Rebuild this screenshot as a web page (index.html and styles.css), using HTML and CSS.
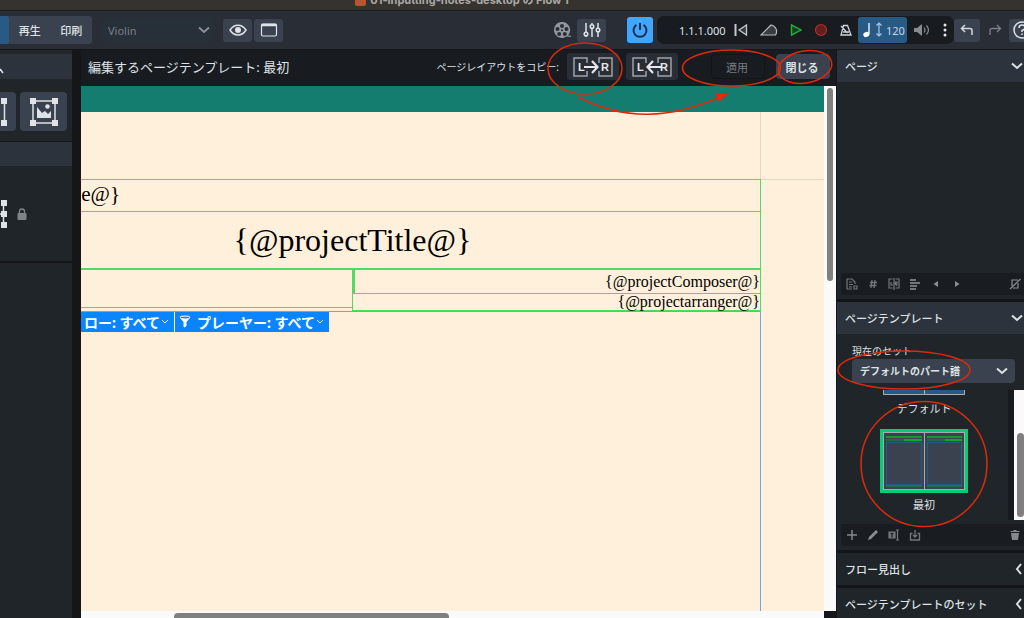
FILE: index.html
```
<!DOCTYPE html>
<html lang="ja">
<head>
  <meta charset="UTF-8" />
  <meta name="viewport" content="width=device-width, initial-scale=1" />
  <title>01-inputting-notes-desktop の Flow 1</title>
  <link rel="stylesheet" href="styles.css">
</head>
<body>
  <!-- Window title -->
  <div class="titlebar">
    <span class="doc-icon"></span>
    <span>01-inputting-notes-desktop の Flow 1</span>
  </div>

  <!-- Main toolbar -->
  <header class="toolbar">
    <nav class="modes">
      <button class="mode active" aria-label="浄書"></button>
      <button class="mode">再生</button>
      <button class="mode">印刷</button>
    </nav>
    <div class="select-box layout-select">
      <select aria-label="レイアウト"><option>Violin</option></select>
      <svg class="chevron" viewBox="0 0 12 8"><path d="M1 1.5l5 4.5 5-4.5"/></svg>
    </div>
    <div class="view-buttons">
      <button class="tool" aria-label="表示">
        <svg width="18" height="14" viewBox="0 0 18 14"><path d="M1 7C5 .5 13 .5 17 7C13 13.500 5 13.500 1 7Z" fill="none" stroke="#e0e3e8" stroke-width="1.500"/><circle cx="9" cy="7" r="3" fill="#e0e3e8"/></svg>
      </button>
      <button class="tool" aria-label="ウィンドウ">
        <svg width="18" height="14" viewBox="0 0 18 14"><rect x="1.500" y="1" width="15" height="12" rx="1.500" fill="none" stroke="#e0e3e8" stroke-width="1.200"/><path d="M1.500 2h15" stroke="#e0e3e8" stroke-width="2.500"/></svg>
      </button>
    </div>

    <div class="toolbar-right">
      <button class="bare" aria-label="ビデオ">
        <svg width="18" height="18" viewBox="0 0 18 18"><path fill="#93979d" fill-rule="evenodd" d="M9 1a8 8 0 1 0 4.500 14.600l4.500.4v-1.300l-3-.3A8 8 0 0 0 9 1zM9 3a2 2 0 1 1 0 4 2 2 0 0 1 0-4zM4.500 6a2 2 0 1 1 0 4 2 2 0 0 1 0-4zM13.500 6a2 2 0 1 1 0 4 2 2 0 0 1 0-4zM6.200 11a2 2 0 1 1 0 4 2 2 0 0 1 0-4zM11.800 11a2 2 0 1 1 0 4 2 2 0 0 1 0-4zM9 8.200a1 1 0 1 0 0 2 1 1 0 0 0 0-2z"/></svg>
      </button>
      <button class="tool" aria-label="ミキサー">
        <svg width="18" height="16" viewBox="0 0 18 16" fill="#39424e" stroke="#e0e3e8" stroke-width="1.500"><path d="M3 1v14M9 1v14M15 1v14"/><circle cx="3" cy="12" r="1.800"/><circle cx="9" cy="4.500" r="1.800"/><circle cx="15" cy="8" r="1.800"/></svg>
      </button>
      <button class="power" aria-label="有効化">
        <svg width="16" height="16" viewBox="0 0 16 16" fill="none" stroke="#14304d" stroke-width="2"><path d="M4.500 2.800a6.500 6.500 0 1 0 7 0M8 1v7"/></svg>
      </button>
      <div class="transport">
        <span class="position">1.1.1.000</span>
        <button class="bare" aria-label="先頭へ">
          <svg width="14" height="14" viewBox="0 0 14 14" fill="#3a3d40" stroke="#c4c7cb" stroke-width="1.300"><path d="M1.500 1v12" stroke-width="2"/><path d="M12.500 2v10L5 7z"/></svg>
        </button>
        <button class="bare" aria-label="ディレイ">
          <svg width="18" height="14" viewBox="0 0 18 14" fill="#3a3d40" stroke="#b7babe" stroke-width="1.200"><path d="M1 12L11 2C16 3 18 8 15.500 12z"/></svg>
        </button>
        <button class="bare" aria-label="再生開始">
          <svg width="12" height="14" viewBox="0 0 12 14"><path d="M1.500 2v10L11 7z" fill="#12461f" stroke="#24b43c" stroke-width="1.400"/></svg>
        </button>
        <button class="bare" aria-label="録音">
          <svg width="14" height="14" viewBox="0 0 14 14"><circle cx="7" cy="7" r="5.500" fill="#61201f" stroke="#bd2b25" stroke-width="1.200"/></svg>
        </button>
        <button class="bare" aria-label="クリック">
          <svg width="12" height="14" viewBox="0 0 12 14" fill="none" stroke="#d0d3d6" stroke-width="1.300"><path d="M3.500 2.500h4L11 12H1zM1 3l6.500 7M3 9h6"/></svg>
        </button>
        <button class="tempo">
          <svg width="20" height="18" viewBox="0 0 20 18"><path d="M7 2v11" stroke="#fff" stroke-width="1.300"/><ellipse cx="4.300" cy="13.500" rx="3.100" ry="2.500" fill="#fff" transform="rotate(-20 4.300 13.500)"/><path d="M17 2v13M14.500 4.500L17 2l2.500 2.500M14.500 12.500L17 15l2.500-2.500" fill="none" stroke="#a9c6de" stroke-width="1.200"/></svg>
          <span>120</span>
        </button>
        <button class="bare" aria-label="音量">
          <svg width="18" height="14" viewBox="0 0 18 14"><path d="M1 5h3l5-4v12L4 9H1z" fill="#888c91"/><path d="M11 4.500q2 2.500 0 5M13.500 2.500q4 4.500 0 9" fill="none" stroke="#888c91" stroke-width="1.200"/></svg>
        </button>
        <button class="bare" aria-label="その他">
          <svg width="4" height="14" viewBox="0 0 4 14" fill="#e4e6e8"><circle cx="2" cy="2" r="1.500"/><circle cx="2" cy="7" r="1.500"/><circle cx="2" cy="12" r="1.500"/></svg>
        </button>
      </div>
      <button class="tool undo" aria-label="元に戻す">
        <svg width="14" height="12" viewBox="0 0 14 12" fill="none" stroke="#d5d9de" stroke-width="1.500"><path d="M5 1L1.500 4.500 5 8M1.500 4.500H10q2 0 2 2V11"/></svg>
      </button>
      <button class="bare redo" aria-label="やり直し">
        <svg width="14" height="12" viewBox="0 0 14 12" fill="none" stroke="#7b8087" stroke-width="1.300"><path d="M9 1l3.500 3.500L9 8M12.500 4.500H4q-2 0-2 2V11"/></svg>
      </button>
      <button class="tool help" aria-label="ヘルプ">
        <svg width="18" height="18" viewBox="0 0 18 18" fill="none" stroke="#e0e3e8" stroke-width="1.500"><circle cx="9" cy="9" r="8"/><path d="M6 7q0-3 3-3t3 2.500q0 1.500-3 3V11M9 12.500V14"/></svg>
      </button>
    </div>
  </header>

  <main class="workspace">
    <!-- Left panel -->
    <aside class="left-panel">
      <div class="left-header"><svg width="4" height="6" viewBox="0 0 4 6"><path d="M0 1l3 4" stroke="#dfe2e6" stroke-width="1.500"/></svg></div>
      <div class="insert-tools">
        <button class="insert cut" aria-label="テキストフレームを挿入">
          <svg width="9" height="28" viewBox="0 0 9 28"><path d="M4.500 3v22" stroke="#dfe2e6" stroke-width="1.500"/><path d="M1 0h6v6H1zM1 22h6v6H1z" fill="#dfe2e6"/></svg>
        </button>
        <button class="insert" aria-label="グラフィックフレームを挿入">
          <svg width="28" height="28" viewBox="0 0 28 28"><path d="M3 3h22v22H3z" fill="none" stroke="#dfe2e6" stroke-width="1.500"/><path d="M0 0h6v6H0zM22 0h6v6h-6zM0 22h6v6H0zM22 22h6v6h-6z" fill="#dfe2e6"/><path d="M7 9l5 6 3-2 3 3 3-3v7H7z" fill="#dfe2e6"/><circle cx="17.500" cy="8.500" r="2.300" fill="#dfe2e6"/></svg>
        </button>
      </div>
      <div class="left-header second"></div>
      <div class="constraints">
        <svg width="7" height="28" viewBox="0 0 7 28"><path d="M3.500 3v22M0 14h4" stroke="#dfe2e6" stroke-width="1.500"/><path d="M1 0h6v6H1zM1 11h6v6H1zM1 22h6v6H1z" fill="#dfe2e6"/></svg>
        <svg width="10" height="12" viewBox="0 0 10 12"><rect x="0.500" y="5" width="9" height="7" rx="1" fill="#7f8489"/><path d="M2.500 5.500V3.500a2.500 2.500 0 0 1 5 0v2" fill="none" stroke="#7f8489" stroke-width="1.300"/></svg>
      </div>
    </aside>

    <!-- Page template editor -->
    <section class="editor">
      <div class="editor-bar">
        <h1>編集するページテンプレート: 最初</h1>
        <span class="copy-label">ページレイアウトをコピー:</span>
        <button class="copy" aria-label="左から右へコピー">
          <svg width="40" height="20" viewBox="0 0 40 20"><path d="M14 6V1H1v18h13v-5M26 6V1h13v18H26v-5" fill="none" stroke="#9da1a8" stroke-width="1.500"/><path d="M11 10h13M19 4l5.500 6-5.500 6" fill="none" stroke="#e5e7eb" stroke-width="2.200"/><text x="5" y="14">L</text><text x="28" y="14">R</text></svg>
        </button>
        <button class="copy" aria-label="右から左へコピー">
          <svg width="40" height="20" viewBox="0 0 40 20"><path d="M14 6V1H1v18h13v-5M26 6V1h13v18H26v-5" fill="none" stroke="#9da1a8" stroke-width="1.500"/><path d="M29 10H16M21 4l-5.500 6 5.500 6" fill="none" stroke="#e5e7eb" stroke-width="2.200"/><text x="5" y="14">L</text><text x="28" y="14">R</text></svg>
        </button>
        <button class="apply" disabled>適用</button>
        <button class="close">閉じる</button>
      </div>

      <div class="canvas">
        <div class="page">
          <div class="page-band"></div>
          <div class="page-margin"><div class="margin-guide"></div></div>
          <div class="frames">
            <div class="frame name-frame"><span>{@layoutName@}</span></div>
            <div class="frame title-frame">{@projectTitle@}</div>
            <div class="credits">
              <div class="frame lyricist-frame"></div>
              <div>
                <div class="frame composer-frame">{@projectComposer@}</div>
                <div class="frame arranger-frame">{@projectarranger@}</div>
              </div>
            </div>
            <div class="music-frame">
              <button class="filter flow-filter"><span>ロー: すべて</span><svg width="8" height="6" viewBox="0 0 8 6"><path d="M1 1l3 3 3-3"/></svg></button>
              <button class="filter"><svg class="funnel" width="12" height="13" viewBox="0 0 12 13"><path d="M1 2l4 5v5l2-1V7l4-5z" fill="#fff"/><ellipse cx="6" cy="2.500" rx="5" ry="1.500" fill="#0a84ff"/></svg><span>プレーヤー: すべて</span><svg width="8" height="6" viewBox="0 0 8 6"><path d="M1 1l3 3 3-3"/></svg></button>
            </div>
          </div>
        </div>
        <div class="scroll-y"><div class="thumb"></div></div>
        <div class="scroll-x"><div class="thumb"></div></div>
      </div>
    </section>

    <!-- Right panel -->
    <aside class="right-panel">
      <section class="pages">
        <h2><button class="section-header">ページ<svg class="chevron" viewBox="0 0 12 8"><path d="M1 1.500l5 4.500 5-4.500"/></svg></button></h2>
        <div class="pages-body"></div>
        <div class="actions">
          <button class="bare" aria-label="ページを挿入"><svg width="12" height="12" viewBox="0 0 12 12" fill="none" stroke="#73777b" stroke-width="1.200"><path d="M6 11H1V1h5l3 3v2M3 4h3M3 6.500h4M3 9h3"/><path d="M8 8h3v3H8z"/></svg></button>
          <button class="bare" aria-label="ページ番号"><svg width="12" height="12" viewBox="0 0 12 12" stroke="#73777b" stroke-width="1.300"><path d="M5 2L4 10M8 2L7 10M3 4.500h7M2.500 7.500h7"/></svg></button>
          <button class="bare" aria-label="ページを入れ替え"><svg width="12" height="12" viewBox="0 0 12 12" fill="none" stroke="#73777b" stroke-width="1.200"><path d="M4.500 1H1v9h3.500M7.500 1H11v9H7.500M6 0v12M3 4v3h2M7.500 7V4H9v2H7.500L9 8"/></svg></button>
          <button class="bare" aria-label="配置"><svg width="12" height="12" viewBox="0 0 12 12" stroke="#73777b" stroke-width="2"><path d="M1 2h6M1 5h10M1 8h7M1 11h6"/></svg></button>
          <button class="bare" aria-label="前へ"><svg width="12" height="12" viewBox="0 0 12 12"><path d="M8 3v6L3.500 6z" fill="#8b8f93"/></svg></button>
          <button class="bare" aria-label="次へ"><svg width="12" height="12" viewBox="0 0 12 12"><path d="M4 3v6l4.500-3z" fill="#8b8f93"/></svg></button>
          <button class="bare last" aria-label="オーバーライドを削除"><svg width="12" height="12" viewBox="0 0 12 12" fill="none" stroke="#8b8f93" stroke-width="1.200"><path d="M3 8V2h6M9 5v5H4M1 11L11.500 1"/></svg></button>
        </div>
      </section>

      <section class="templates">
        <h2><button class="section-header">ページテンプレート<svg class="chevron" viewBox="0 0 12 8"><path d="M1 1.500l5 4.500 5-4.500"/></svg></button></h2>
        <div class="set-field">
          <label for="currentSet">現在のセット</label>
          <div class="select-box set-select">
            <select id="currentSet"><option>デフォルトのパート譜</option></select>
            <svg class="chevron" viewBox="0 0 12 8"><path d="M1 1.500l5 4.500 5-4.500"/></svg>
          </div>
        </div>
        <div class="template-list">
          <div class="template-items">
            <div class="spread partial"><div class="leaf"></div><div class="leaf"></div></div>
            <span class="caption">デフォルト</span>
            <div class="spread selected">
              <div class="leaf"><i class="strip"></i><i class="strip short"></i><i class="music"></i><i class="strip foot"></i></div>
              <div class="leaf"><i class="strip"></i><i class="strip short"></i><i class="music"></i><i class="strip foot"></i></div>
            </div>
            <span class="caption">最初</span>
          </div>
          <div class="list-scroll"><div class="thumb"></div></div>
        </div>
        <div class="actions">
          <button class="bare" aria-label="追加"><svg width="12" height="12" viewBox="0 0 12 12" stroke="#85898d" stroke-width="1.500"><path d="M6 1v10M1 6h10"/></svg></button>
          <button class="bare" aria-label="編集"><svg width="12" height="12" viewBox="0 0 12 12"><path d="M1 11l1-3 7-7 2 2-7 7z" fill="#8b8f93"/></svg></button>
          <button class="bare" aria-label="名前を変更"><svg width="12" height="12" viewBox="0 0 12 12" fill="none" stroke="#73777b" stroke-width="1.200"><path d="M1 3h6v6H1z" fill="#73777b"/><path d="M2.500 4.500h3M4 4.500v4" stroke="#191c20"/><path d="M8 1h3M9.500 1v10M8 11h3"/></svg></button>
          <button class="bare" aria-label="読み込み"><svg width="12" height="12" viewBox="0 0 12 12" fill="none" stroke="#73777b" stroke-width="1.300"><path d="M3.500 4.500H1.500V11h9V4.500h-2M6 1v7M4 6l2 2 2-2"/></svg></button>
          <button class="bare last" aria-label="削除"><svg width="12" height="12" viewBox="0 0 12 12" fill="#85898d"><path d="M2 4h8l-1 7H3zM1.500 2H4.500V1h3v1h3v1h-9z"/></svg></button>
        </div>
      </section>

      <h2><button class="section-header closed">フロー見出し<svg class="chevron-left" viewBox="0 0 8 12"><path d="M6 1L2 6l4 5"/></svg></button></h2>
      <h2><button class="section-header closed">ページテンプレートのセット<svg class="chevron-left" viewBox="0 0 8 12"><path d="M6 1L2 6l4 5"/></svg></button></h2>
    </aside>
  </main>

  <!-- Red markings over the window -->
  <svg class="marks" width="1024" height="618" viewBox="0 0 1024 618">
    <ellipse cx="585" cy="68.500" rx="37" ry="25.500"/>
    <ellipse cx="731.500" cy="68" rx="49" ry="18"/>
    <ellipse cx="805" cy="67" rx="27" ry="16" transform="rotate(-10 805 67)"/>
    <ellipse cx="904" cy="370" rx="66" ry="19"/>
    <ellipse cx="924" cy="464" rx="63" ry="62.500"/>
    <path d="M578 97C625 121 670 119 720 97"/>
    <path class="head" d="M727 94l-8 7-2.500-7z"/>
  </svg>
</body>
</html>
```
FILE: styles.css
```
* {
  box-sizing: border-box;
}
body {
  margin: 0;
  height: 100vh;
  display: flex;
  flex-direction: column;
  overflow: hidden;
  position: relative;
  background: #14161a;
  color: #dfe2e6;
  font-family: "Noto Sans", "Noto Sans CJK JP", sans-serif;
  font-size: 11px;
}
button, select {
  font: inherit;
  color: inherit;
  border: none;
  padding: 0;
  margin: 0;
  background: none;
}
svg {
  display: block;
  flex: none;
}
h1, h2 {
  margin: 0;
  font-size: 11px;
  font-weight: 500;
}

/* Title bar */
.titlebar {
  height: 11px;
  flex: none;
  display: flex;
  justify-content: center;
  align-items: flex-end;
  gap: 4px;
  padding: 0 100px 4px 0;
  overflow: hidden;
  background: #343330;
  border-bottom: 1px solid #1b1b1b;
  color: #aaa8a5;
  font-family: Inter, "Noto Sans CJK JP", sans-serif;
  font-size: 11px;
  font-weight: 700;
  line-height: 12px;
}
.doc-icon {
  width: 11px;
  height: 11px;
  border-radius: 2px;
  background: #b4572e;
}

/* Toolbar */
.toolbar {
  height: 38px;
  flex: none;
  display: flex;
  align-items: center;
  background: #292d35;
  overflow: hidden;
}
.modes {
  display: flex;
  height: 28px;
  width: 92px;
  background: #39424e;
  border-radius: 0 3px 3px 0;
  font-weight: 500;
}
.mode {
  width: 42px;
}
.mode.active {
  width: 9px;
  background: #285a86;
  border-radius: 0 3px 3px 0;
}
.select-box {
  display: flex;
  align-items: center;
  border-radius: 4px;
}
.select-box select {
  flex: 1;
  min-width: 0;
  height: 100%;
  appearance: none;
}
.chevron {
  width: 12px;
  height: 8px;
  fill: none;
  stroke: #dfe2e6;
  stroke-width: 2;
}
.layout-select {
  width: 112px;
  height: 24px;
  margin-left: 10px;
  padding: 0 4px 0 6px;
  background: #272f38;
}
.layout-select select {
  color: #7a8088;
  font-size: 11px;
}
.layout-select .chevron {
  stroke: #8a9098;
}
.view-buttons {
  display: flex;
  gap: 2px;
  margin-left: 9px;
}
.tool, .power {
  display: flex;
  align-items: center;
  justify-content: center;
  width: 29px;
  height: 23px;
  border-radius: 3px;
  background: #39424e;
}
.toolbar-right {
  display: flex;
  align-items: center;
  margin-left: auto;
  margin-right: -11px;
}
.toolbar-right > .bare {
  margin-right: 6px;
}
.power {
  width: 26px;
  height: 26px;
  margin: 0 4px 0 21px;
  background: #42a5ff;
}
.transport {
  display: flex;
  align-items: center;
  gap: 12px;
  height: 28px;
  width: 297px;
  padding: 0 7px 0 22px;
  border-radius: 7px;
  background: #181b20;
}
.position {
  width: 43px;
  white-space: nowrap;
}
.tempo {
  display: flex;
  align-items: center;
  gap: 4px;
  height: 26px;
  width: 51px;
  margin: 0 -6px;
  padding-left: 4px;
  border-radius: 3px;
  background: #285a86;
  color: #c5d7e6;
}
.undo {
  width: 26px;
  margin-right: 8px;
}
.toolbar-right > .redo {
  margin-right: 7px;
}
.help {
  width: 26px;
}

/* Workspace */
.workspace {
  flex: 1;
  min-height: 0;
  display: grid;
  grid-template-columns: 72px minmax(0, 1fr) 187px;
  border-top: 1px solid #14161a;
}
.left-panel {
  background: #202529;
  border-top: 4px solid #23272b;
}
.left-header {
  height: 25px;
  padding-top: 14px;
  background: #2d333c;
}
.left-header.second {
  border-top: 1px solid #14161a;
}
.insert-tools {
  display: flex;
  gap: 4px;
  padding: 13px 0 10px;
}
.insert {
  width: 47px;
  height: 39px;
  display: flex;
  align-items: center;
  justify-content: center;
  border-radius: 4px;
  background: #39424e;
}
.insert.cut {
  width: 16px;
  border-radius: 0 4px 4px 0;
  justify-content: flex-start;
}
.constraints {
  display: flex;
  align-items: center;
  gap: 10px;
  height: 97px;
  border-bottom: 2px solid #14161a;
}

/* Editor */
.editor {
  display: flex;
  flex-direction: column;
  min-width: 0;
  min-height: 0;
  padding: 0 1px 0 9px;
}
.editor-bar {
  height: 36px;
  flex: none;
  display: flex;
  align-items: center;
  padding: 0 6px 3px 7px;
  background: #181b20;
}
.editor-bar h1 {
  font-size: 13px;
  font-weight: 400;
  white-space: nowrap;
}
.copy-label {
  margin-left: auto;
  margin-right: 8px;
  font-size: 10px;
  white-space: nowrap;
}
.copy {
  display: flex;
  align-items: center;
  justify-content: center;
  width: 52px;
  height: 27px;
  margin-right: 7px;
  border-radius: 3px;
  background: #292d35;
}
.copy text {
  fill: #e5e7eb;
  font-family: "Liberation Sans", sans-serif;
  font-size: 11px;
  font-weight: 700;
}
.apply, .close {
  width: 54px;
  height: 25px;
  border-radius: 4px;
}
.apply {
  margin: 0 11px 0 26px;
  padding-right: 2px;
  border: 1px solid #121417;
  color: #777b80;
}
.close {
  padding-right: 2px;
  background: #39424e;
  font-weight: 700;
}
.canvas {
  flex: 1;
  min-height: 0;
  display: grid;
  grid-template-columns: minmax(0, 1fr) 12px;
  grid-template-rows: minmax(0, 1fr) 7px;
}
.page {
  display: flex;
  flex-direction: column;
  background: #fef0da;
  color: #000;
  font-family: "Liberation Serif", serif;
}
.page-band {
  height: 26px;
  background: #157d6f;
}
.page-margin {
  height: 68px;
  border-bottom: 1px solid #e3d6c2;
}
.margin-guide {
  height: 100%;
  margin-right: 63px;
  border-right: 1px solid #e3d6c2;
}
.frames {
  flex: 1;
  display: flex;
  flex-direction: column;
  margin: -1px 63px 0 0;
}
.frame {
  display: flex;
  align-items: center;
  border: 1px solid #4fdc66;
  border-left: none;
}
.name-frame {
  height: 33px;
  padding-bottom: 3px;
  font-size: 21px;
}
.name-frame span {
  display: flex;
  justify-content: flex-end;
  width: 39px;
  overflow: hidden;
}
.title-frame {
  height: 59px;
  margin-top: -1px;
  padding-right: 136px;
  justify-content: center;
  border-bottom-width: 2px;
  font-size: 32px;
}
.credits {
  display: grid;
  grid-template-columns: 2fr 3fr;
  height: 41px;
}
.lyricist-frame {
  height: 38px;
  border-top: none;
}
.composer-frame, .arranger-frame {
  justify-content: flex-end;
  border-top: none;
  font-size: 16px;
}
.composer-frame {
  height: 24px;
  border-left: 2px solid #4fdc66;
}
.arranger-frame {
  height: 17px;
  margin-left: -1px;
  border-left: 1px solid #4fdc66;
}
.music-frame {
  flex: 1;
  display: flex;
  align-items: flex-start;
  gap: 1px;
  border-top: 1px solid #6aa6ee;
  border-right: 1px solid #6aa6ee;
}
.filter {
  display: flex;
  align-items: center;
  gap: 1px;
  height: 20px;
  padding: 0 5px 1px 4px;
  background: #0a84ff;
  color: #fff;
  font-family: "Noto Sans", "Noto Sans CJK JP", sans-serif;
  font-size: 14px;
  font-weight: 700;
  white-space: nowrap;
}
.filter svg {
  fill: none;
  stroke: #fff;
  stroke-width: 1;
}
.filter .funnel {
  margin-right: 5px;
}
.flow-filter {
  justify-content: flex-end;
  width: 93px;
}
.thumb {
  border-radius: 4px;
  background: #808080;
}
.scroll-y {
  padding: 2px 3px;
  background: #fafafa;
}
.scroll-y .thumb {
  height: 37%;
}
.scroll-x {
  padding: 2px 0 0 93px;
  background: #fafafa;
}
.scroll-x .thumb {
  width: 275px;
  max-width: 100%;
  height: 8px;
}

/* Right panel */
.right-panel {
  display: flex;
  flex-direction: column;
  gap: 3px;
  background: #141518;
  overflow: hidden;
}
.section-header {
  display: flex;
  align-items: center;
  justify-content: space-between;
  width: 100%;
  height: 32px;
  padding: 0 1px 0 8px;
  background: #2d333c;
  text-align: left;
}
.section-header.closed {
  background: #202529;
}
.chevron-left {
  width: 8px;
  height: 12px;
  fill: none;
  stroke: #dfe2e6;
  stroke-width: 2;
}
.pages, .templates {
  background: #202529;
  padding-bottom: 4px;
}
.pages-body {
  height: 191px;
}
.actions {
  display: flex;
  align-items: center;
  gap: 9px;
  height: 22px;
  margin-left: 4px;
  padding: 0 3px 0 5px;
  border-radius: 3px 0 0 3px;
  background: #191c20;
}
.actions .last {
  margin-left: auto;
}
.set-field {
  padding: 9px 9px 7px 15px;
}
.set-field label {
  display: block;
  line-height: 16px;
  font-size: 10px;
}
.set-select {
  height: 24px;
  padding: 0 7px 0 4px;
  background: #39424e;
}
.set-select select {
  padding-left: 4px;
  font-size: 10px;
  font-weight: 700;
}
.template-list {
  display: flex;
  height: 130px;
  margin-bottom: 4px;
}
.template-items {
  flex: 1;
  display: flex;
  flex-direction: column;
  align-items: center;
  padding-left: 3px;
  border-right: 6px solid #16191d;
}
.spread {
  display: flex;
  width: 82px;
  background: #39424e;
}
.leaf {
  flex: 1;
  padding: 3px 2px 2px;
  border: 1px solid #a9abb0;
}
.leaf + .leaf {
  border-left-width: 0;
}
.spread.partial .leaf {
  height: 5px;
  padding: 0;
  border-top: none;
  background: #285a86;
}
.spread.selected {
  width: 88px;
  height: 64px;
  border: 3px solid #05cd76;
}
.selected .leaf {
  display: flex;
  flex-direction: column;
}
.strip {
  height: 2px;
  margin-bottom: 1px;
  background: #159a2a;
}
.strip.short {
  background: linear-gradient(90deg, #25684a 50%, #10a82c 50%);
}
.music {
  flex: 1;
  border: 1px solid #285a86;
}
.strip.foot {
  margin: 0;
  background: #1d7050;
}
.caption {
  height: 16px;
  line-height: 16px;
  margin-top: 4px;
}
.partial + .caption {
  margin-top: 6px;
  margin-bottom: 12px;
}
.list-scroll {
  width: 10px;
  padding: 43px 0 3px 3px;
  background: #fafafa;
}
.list-scroll .thumb {
  height: 100%;
}

/* Markings */
.marks {
  position: absolute;
  top: 0;
  left: 0;
  fill: none;
  stroke: #d92b0c;
  stroke-width: 1.5;
  pointer-events: none;
}
.marks .head {
  fill: #e62c0a;
}
```
